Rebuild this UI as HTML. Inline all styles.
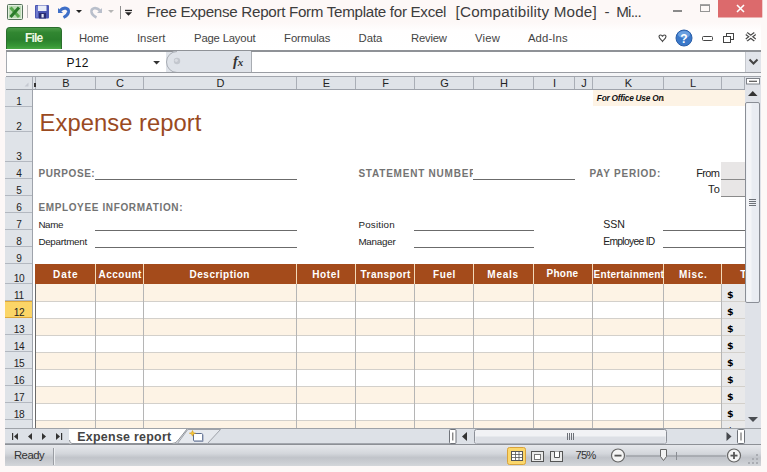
<!DOCTYPE html>
<html><head><meta charset="utf-8"><title>Free Expense Report Form Template for Excel</title>
<style>
*{box-sizing:border-box;margin:0;padding:0}
html,body{width:767px;height:472px;overflow:hidden;background:#fdf8f7;font-family:"Liberation Sans",sans-serif;}
#app{position:relative;width:767px;height:472px;overflow:hidden;background:#fdf8f7}
.abs{position:absolute}
.t{position:absolute;white-space:pre;line-height:1}
.tt{color:#3d3d3d}
.tab{color:#444}
#file{position:absolute;left:6px;top:27px;width:56px;height:22px;border-radius:4px 4px 0 0;background:linear-gradient(#4a9a47 0%,#318631 22%,#2a7f2c 55%,#379636 85%,#4aa845 100%);border:1px solid #2b6e2d;border-bottom:none}
#ribline{position:absolute;left:6px;top:50px;width:755px;height:2px;background:#8f9297}
#fbar{position:absolute;left:6px;top:52px;width:755px;height:20px;background:#dfe3e9}
#namebox{position:absolute;left:0;top:0;width:160px;height:20px;background:#fff;border-left:1px solid #a6aab0}
#finput{position:absolute;left:245px;top:0;width:494px;height:20px;background:#fff;border-left:1px solid #a8acb2}
#fexp{position:absolute;left:739px;top:0;width:16px;height:20px;background:#e1e4ea;border-left:1px solid #c5c8ce}
#gap{position:absolute;left:6px;top:72px;width:755px;height:5px;background:#f4f5f7;border-top:1px solid #9a9da3;border-bottom:1px solid #a2a6ad}
#colhdr{position:absolute;left:6px;top:77px;width:739px;height:13px;background:#dfe3e8;border-bottom:1px solid #9ea3ab;box-shadow:-1px 0 0 #dfe3e8}
.ch{position:absolute;top:0;height:12px;border-right:1px solid #a9aeb6;font-size:11px;line-height:13px;text-align:center;color:#222;padding-left:1px}
#rowhdr{position:absolute;left:5px;top:90px;width:28px;height:338px;background:#dfe3e8;border-right:1px solid #9ea3ab;overflow:hidden}
.rh{position:absolute;left:0;width:27px;padding-left:1px;border-bottom:1px solid #b3b8c0;font-size:11px;letter-spacing:-0.4px;text-align:center;color:#222}
.rh span{position:absolute;left:1px;right:0;bottom:-1px;line-height:11px;transform:scaleX(0.92)}
#grid{position:absolute;left:33px;top:90px;width:712px;height:338px;background:#fff;overflow:hidden}
#grid .t{color:#222}
#grid .lbl{font-weight:bold;color:#737373}
.ul{position:absolute;height:1px;background:#6b6b6b}
.th{position:absolute;top:174px;height:20px;background:#a44b1b;border-right:1px solid #f3d9b8}
#grid .tht{color:#fff;font-weight:bold}
.tr{position:absolute;left:3px;width:686px;height:17px}
.hl{position:absolute;left:3px;width:709px;height:1px;background:#d3d0cb}
.vl{position:absolute;top:194px;width:1px;height:144px;background:#b5b5b5}
.dol{position:absolute;left:689px;width:23px;height:17px;background:#e9e9ea;font-family:'DejaVu Sans',sans-serif;font-size:9.5px;line-height:22px;padding-left:5px;color:#000;font-weight:bold;overflow:hidden}
#vscroll{position:absolute;left:745px;top:77px;width:16px;height:351px;background:#dfe2e8}
#tabbar{position:absolute;left:5px;top:428px;width:756px;height:17px;background:#dde1e7;border-top:1px solid #9ea2a8}
#status{position:absolute;left:5px;top:444px;width:756px;height:22px;background:linear-gradient(#e6e8ec 0%,#d4d7dc 40%,#c1c4ca 60%,#c9ccd1 80%,#d3d6da 100%);border-top:1px solid #8d9096}
</style></head><body><div id="app">


<div class="abs" style="left:6px;top:22px;width:755px;height:28px;background:linear-gradient(#fdf8f7 0%,#fffefe 30%,#fff 100%)"></div>
<svg class="abs" style="left:0;top:0" width="767" height="26" viewBox="0 0 767 26">
 <!-- excel icon -->
 <rect x="7.5" y="4.5" width="15" height="15" rx="1" fill="#e3efdf" stroke="#55715a"/>
 <rect x="9" y="6" width="12" height="12" fill="#8cc383" opacity=".45"/>
 <path d="M10.500 7.500 L19 17" stroke="#57a84c" stroke-width="3"/><path d="M19 7.500 L10.500 17" stroke="#2b7a2b" stroke-width="3"/>
 <rect x="27" y="5" width="1" height="13" fill="#b9b9b9"/>
 <!-- save -->
 <rect x="35" y="5" width="14" height="13.500" rx="1" fill="#4a55b2"/>
 <rect x="36" y="6" width="2" height="11.500" fill="#6f79cc"/>
 <rect x="38" y="5.500" width="8.500" height="5.500" fill="#e9edf8"/>
 <rect x="39" y="13" width="7" height="5.500" fill="#292c74"/>
 <rect x="41.500" y="14" width="2.200" height="3.500" fill="#e4e7f6"/>
 <!-- undo -->
 <path d="M58 8 L58 13 L63 13 Z" fill="#3f6fc8"/>
 <path d="M60 10.5 C64 6.5 69 8 68.5 12 C68 15 65.5 16.5 63.5 17.5" fill="none" stroke="#3f6fc8" stroke-width="3"/>
 <path d="M76 10 L82 10 L79 13 Z" fill="#222"/>
 <!-- redo -->
 <path d="M102 8 L102 13 L97 13 Z" fill="#b9bfcb"/>
 <path d="M100 10.5 C96 6.5 91 8 91.5 12 C92 15 94.500 16.500 96.500 17.500" fill="none" stroke="#b9bfcb" stroke-width="2.600"/>
 <path d="M108 10 L114 10 L111 13 Z" fill="#b5b5b5"/>
 <rect x="120" y="6" width="1" height="13" fill="#8e8e8e"/>
 <rect x="125" y="9.800" width="7" height="1.300" fill="#222"/>
 <path d="M125 12.300 L132 12.300 L128.500 15.800 Z" fill="#222"/>
 <!-- window controls -->
 <rect x="673" y="10" width="9" height="2" fill="#8a8a8a"/>
 <rect x="700.500" y="5" width="9" height="6.500" fill="none" stroke="#959595"/>
 <rect x="700" y="4.300" width="10" height="1.700" fill="#959595"/>
 <rect x="718" y="0" width="44.300" height="17.500" fill="#dc6a6c"/>
 <path d="M737 5 L744 12 M744 5 L737 12" stroke="#fff" stroke-width="1.600"/>
</svg>

<div class="t ft" id="ti1" style="left:146.6px;top:3.8px;font-size:15.2px;letter-spacing:-0.31px;color:#3d3d3d">Free Expense Report Form Template for Excel</div>
<div class="t ft" id="ti2" style="left:455.6px;top:3.8px;font-size:15.2px;letter-spacing:0.18px;color:#3d3d3d">[Compatibility Mode]</div>
<div class="t ft" id="ti3" style="left:604.6px;top:3.8px;font-size:15.2px;letter-spacing:-0.56px;color:#3d3d3d">-</div>
<div class="t ft" id="ti4" style="left:616.2px;top:3.8px;font-size:15.2px;letter-spacing:-0.77px;color:#3d3d3d">Mi...</div>
<div id="file"></div>
<div class="t ft" id="filet" style="left:25.0px;top:32.1px;font-size:12px;letter-spacing:-0.82px;color:#eef8e2;font-weight:bold">File</div>
<div class="t ft" id="tab0" style="left:79.1px;top:32.6px;font-size:11.3px;letter-spacing:-0.18px;color:#444">Home</div>
<div class="t ft" id="tab1" style="left:136.9px;top:32.6px;font-size:11.3px;letter-spacing:0.05px;color:#444">Insert</div>
<div class="t ft" id="tab2" style="left:194.1px;top:32.6px;font-size:11.3px;letter-spacing:-0.19px;color:#444">Page Layout</div>
<div class="t ft" id="tab3" style="left:284.1px;top:32.6px;font-size:11.3px;letter-spacing:-0.11px;color:#444">Formulas</div>
<div class="t ft" id="tab4" style="left:358.6px;top:32.6px;font-size:11.3px;letter-spacing:-0.02px;color:#444">Data</div>
<div class="t ft" id="tab5" style="left:411.1px;top:32.6px;font-size:11.3px;letter-spacing:-0.25px;color:#444">Review</div>
<div class="t ft" id="tab6" style="left:474.9px;top:32.6px;font-size:11.3px;letter-spacing:0.23px;color:#444">View</div>
<div class="t ft" id="tab7" style="left:527.9px;top:32.6px;font-size:11.3px;letter-spacing:0.14px;color:#444">Add-Ins</div>

<svg class="abs" style="left:650px;top:26px" width="117" height="24" viewBox="650 26 117 24">
 <path d="M659 36.500 C659 34.500 662 34.500 662.500 36.500 C663 34.500 666 34.500 666 36.500 C666 38.500 663.500 40 662.500 41.500 C661.500 40 659 38.500 659 36.500 Z" fill="#fff" stroke="#444" stroke-width="1.100"/>
 <circle cx="684" cy="38" r="8" fill="#3a78c9" stroke="#2a5ea8"/>
 <ellipse cx="684" cy="34.500" rx="6" ry="3.500" fill="#7fb0ea" opacity=".7"/>
 <text x="684" y="42.500" text-anchor="middle" font-family="Liberation Sans, sans-serif" font-weight="bold" font-size="12" fill="#fff">?</text>
 <rect x="702.500" y="36.500" width="10" height="4" rx="1" fill="#fff" stroke="#444"/>
 <rect x="726.500" y="33.500" width="7" height="6" fill="#fff" stroke="#444"/>
 <rect x="723.500" y="36.500" width="7" height="6" fill="#fff" stroke="#444"/>
 <path d="M746.500 33.500 L755 40 M755 33.500 L746.500 40" stroke="#444" stroke-width="3.600"/>
 <path d="M746.500 33.500 L755 40 M755 33.500 L746.500 40" stroke="#fff" stroke-width="1.500"/>
</svg>
<div id="ribline"></div>


<div id="fbar">
 <div id="namebox"></div>
 <svg class="abs" style="left:145px;top:-1px" width="100" height="22" viewBox="0 0 100 22">
   <path d="M2.200 10 L9 10 L5.600 13.600 Z" fill="#333"/>
   <path d="M100 0 L26 0 A11 11 0 0 0 26 22 L100 22 Z" fill="#dfe3e9"/>
   <path d="M26 0.500 A10.500 10.500 0 0 0 26 21.500" fill="none" stroke="#a9adb4"/>
   <circle cx="26" cy="10" r="3.200" fill="#c3c7ce"/>
   <circle cx="25.300" cy="9.300" r="1.600" fill="#d9dce2"/>
 </svg>
 <div class="t" style="left:227px;top:2px;font-family:'Liberation Serif',serif;font-style:italic;font-weight:bold;font-size:14.500px;color:#333">f<span style="font-size:11px">x</span></div>
 <div id="finput"></div>
 <div id="fexp"><svg width="15" height="20" viewBox="0 1 15 20"><path d="M3.500 8.500 L7.500 12.500 L11.500 8.500" fill="none" stroke="#444" stroke-width="2"/></svg></div>
</div>
<div id="gap"></div>

<div class="t ft" id="nb" style="left:66.6px;top:57.2px;font-size:12px;letter-spacing:0.22px;color:#111">P12</div>
<div id="colhdr">
<div class="ch" style="left:-1px;width:28px;padding-left:0"><svg width="27" height="12"><path d="M23.500 5.500 L23.500 9.500 L19.500 9.500 Z" fill="#c6cad1"/></svg></div>
<div class="ch" style="left:27px;width:3px;border-right:1px solid #a9aeb6"></div>
<div class="abs" style="left:28px;top:6px;width:1.500px;height:4px;background:#333"></div>
<div class="ch" style="left:30px;width:60px">B</div>
<div class="ch" style="left:90px;width:48px">C</div>
<div class="ch" style="left:138px;width:153px">D</div>
<div class="ch" style="left:291px;width:59px">E</div>
<div class="ch" style="left:350px;width:59px">F</div>
<div class="ch" style="left:409px;width:59px">G</div>
<div class="ch" style="left:468px;width:60px">H</div>
<div class="ch" style="left:528px;width:41px">I</div>
<div class="ch" style="left:569px;width:18px">J</div>
<div class="ch" style="left:587px;width:71px">K</div>
<div class="ch" style="left:658px;width:58px">L</div>
<div class="ch" style="left:716px;width:23px"></div>
</div>
<div id="rowhdr">
<div class="rh" style="top:0px;height:17px"><span>1</span></div>
<div class="rh" style="top:17px;height:25px"><span>2</span></div>
<div class="rh" style="top:42px;height:30px"><span>3</span></div>
<div class="rh" style="top:72px;height:17px"><span>4</span></div>
<div class="rh" style="top:89px;height:17px"><span>5</span></div>
<div class="rh" style="top:106px;height:17px"><span>6</span></div>
<div class="rh" style="top:123px;height:17px"><span>7</span></div>
<div class="rh" style="top:140px;height:17px"><span>8</span></div>
<div class="rh" style="top:157px;height:17px"><span>9</span></div>
<div class="rh" style="top:174px;height:20px"><span>10</span></div>
<div class="rh" style="top:194px;height:17px"><span>11</span></div>
<div class="rh" style="top:211px;height:17px;background:#fbd567;border-bottom:1px solid #e0a93a;border-top:1px solid #e0a93a"><span>12</span></div>
<div class="rh" style="top:228px;height:17px"><span>13</span></div>
<div class="rh" style="top:245px;height:17px"><span>14</span></div>
<div class="rh" style="top:262px;height:17px"><span>15</span></div>
<div class="rh" style="top:279px;height:17px"><span>16</span></div>
<div class="rh" style="top:296px;height:17px"><span>17</span></div>
<div class="rh" style="top:313px;height:17px"><span>18</span></div>
<div class="rh" style="top:330px;height:17px"><span style="bottom:-2px">19</span></div>
</div>
<div id="grid">
<div class="abs" style="left:560px;top:0;width:152px;height:16px;background:#fdf3e5"></div>
<div class="abs" style="left:560px;top:0;width:71px;height:16px;overflow:hidden">
<div class="t ft" id="ofc" style="left:3.8px;top:4.1px;font-size:8.3px;letter-spacing:-0.23px;font-style:italic;font-weight:bold;color:#111">For Office Use Only</div>
</div>
<div class="t ft" id="big" style="left:6.6px;top:20.6px;font-size:23.8px;letter-spacing:0.03px;color:#9a4a1f">Expense report</div>
<div class="t ft lbl" id="l1" style="left:5.6px;top:79.2px;font-size:10px;letter-spacing:0.55px;">PURPOSE:</div>
<div class="abs" style="left:320px;top:70px;width:120px;height:20px;overflow:hidden">
<div class="t ft lbl" id="l2" style="left:5.4px;top:9.2px;font-size:10px;letter-spacing:0.78px;">STATEMENT NUMBER</div>
</div>
<div class="t ft lbl" id="l3" style="left:556.4px;top:79.2px;font-size:10px;letter-spacing:0.78px;">PAY PERIOD:</div>
<div class="t ft lbl" id="l4" style="left:5.4px;top:113.2px;font-size:10px;letter-spacing:0.63px;">EMPLOYEE INFORMATION:</div>
<div class="t ft" id="l5" style="left:663.2px;top:77.7px;font-size:11px;letter-spacing:-0.66px;">From</div>
<div class="t ft" id="l6" style="left:675.1px;top:94.4px;font-size:11px;letter-spacing:0.18px;">To</div>
<div class="t ft" id="l7" style="left:5.4px;top:129.7px;font-size:9.8px;letter-spacing:-0.38px;">Name</div>
<div class="t ft" id="l8" style="left:5.4px;top:146.7px;font-size:9.8px;letter-spacing:-0.27px;">Department</div>
<div class="t ft" id="l9" style="left:325.4px;top:129.7px;font-size:9.8px;letter-spacing:0.21px;">Position</div>
<div class="t ft" id="l10" style="left:325.4px;top:146.7px;font-size:9.8px;letter-spacing:-0.23px;">Manager</div>
<div class="t ft" id="l11" style="left:570.3px;top:128.8px;font-size:10.6px;letter-spacing:-0.15px;">SSN</div>
<div class="t ft" id="l12" style="left:570.3px;top:146.7px;font-size:10.3px;letter-spacing:-0.7px;">Employee ID</div>
<div class="ul" style="left:62px;top:89px;width:202px"></div>
<div class="ul" style="left:440px;top:89px;width:102px"></div>
<div class="ul" style="left:62px;top:140px;width:202px"></div>
<div class="ul" style="left:62px;top:157px;width:202px"></div>
<div class="ul" style="left:381px;top:140px;width:120px"></div>
<div class="ul" style="left:381px;top:157px;width:120px"></div>
<div class="ul" style="left:630px;top:140px;width:82px"></div>
<div class="ul" style="left:630px;top:157px;width:82px"></div>
<div class="abs" style="left:688px;top:72px;width:24px;height:18px;background:#e8e6e6;border-bottom:1px solid #8a8a8a"></div>
<div class="abs" style="left:688px;top:90px;width:24px;height:17px;background:#e8e6e6;border-bottom:1px solid #8a8a8a"></div>
<div class="tr" style="top:194px;background:#fdf3e5"></div>
<div class="dol" style="top:194px">$</div>
<div class="tr" style="top:211px;background:#fff"></div>
<div class="dol" style="top:211px">$</div>
<div class="tr" style="top:228px;background:#fdf3e5"></div>
<div class="dol" style="top:228px">$</div>
<div class="tr" style="top:245px;background:#fff"></div>
<div class="dol" style="top:245px">$</div>
<div class="tr" style="top:262px;background:#fdf3e5"></div>
<div class="dol" style="top:262px">$</div>
<div class="tr" style="top:279px;background:#fff"></div>
<div class="dol" style="top:279px">$</div>
<div class="tr" style="top:296px;background:#fdf3e5"></div>
<div class="dol" style="top:296px">$</div>
<div class="tr" style="top:313px;background:#fff"></div>
<div class="dol" style="top:313px">$</div>
<div class="tr" style="top:330px;background:#fdf3e5"></div>
<div class="dol" style="top:330px">$</div>
<div class="hl" style="top:211px"></div>
<div class="hl" style="top:228px"></div>
<div class="hl" style="top:245px"></div>
<div class="hl" style="top:262px"></div>
<div class="hl" style="top:279px"></div>
<div class="hl" style="top:296px"></div>
<div class="hl" style="top:313px"></div>
<div class="hl" style="top:330px"></div>
<div class="abs" style="left:2px;top:194px;width:1px;height:144px;background:#6a6a6a"></div>
<div class="th" style="left:2px;width:61px"></div>
<div class="th" style="left:63px;width:48px"></div>
<div class="th" style="left:111px;width:153px"></div>
<div class="th" style="left:264px;width:59px"></div>
<div class="th" style="left:323px;width:59px"></div>
<div class="th" style="left:382px;width:59px"></div>
<div class="th" style="left:441px;width:60px"></div>
<div class="th" style="left:501px;width:59px"></div>
<div class="th" style="left:560px;width:71px"></div>
<div class="th" style="left:631px;width:58px"></div>
<div class="th" style="left:689px;width:23px;border-right:none"></div>
<div class="t ft tht" id="th0" style="left:19.9px;top:179.5px;font-size:10px;letter-spacing:1.04px;">Date</div>
<div class="t ft tht" id="th1" style="left:65.6px;top:179.5px;font-size:10px;letter-spacing:0.47px;">Account</div>
<div class="t ft tht" id="th2" style="left:156.6px;top:179.5px;font-size:10px;letter-spacing:0.48px;">Description</div>
<div class="t ft tht" id="th3" style="left:279.3px;top:179.5px;font-size:10px;letter-spacing:0.6px;">Hotel</div>
<div class="t ft tht" id="th4" style="left:327.6px;top:179.5px;font-size:10px;letter-spacing:0.46px;">Transport</div>
<div class="t ft tht" id="th5" style="left:399.9px;top:179.5px;font-size:10px;letter-spacing:0.65px;">Fuel</div>
<div class="t ft tht" id="th6" style="left:454.3px;top:179.5px;font-size:10px;letter-spacing:0.75px;">Meals</div>
<div class="t ft tht" id="th7" style="left:513.6px;top:178.9px;font-size:10px;letter-spacing:0.23px;">Phone</div>
<div class="t ft tht" id="th8" style="left:560.6px;top:179.5px;font-size:10px;letter-spacing:0.26px;">Entertainment</div>
<div class="t ft tht" id="th9" style="left:645.9px;top:179.5px;font-size:10px;letter-spacing:0.7px;">Misc.</div>
<div class="t ft tht" id="th10" style="left:707.2px;top:179.5px;font-size:10px;letter-spacing:0px;">T</div>
<div class="vl" style="left:62px"></div>
<div class="vl" style="left:110px"></div>
<div class="vl" style="left:263px"></div>
<div class="vl" style="left:322px"></div>
<div class="vl" style="left:381px"></div>
<div class="vl" style="left:440px"></div>
<div class="vl" style="left:500px"></div>
<div class="vl" style="left:559px"></div>
<div class="vl" style="left:630px"></div>
<div class="vl" style="left:688px"></div>
</div>

<div id="vscroll">
<svg width="16" height="351" viewBox="0 0 16 351">
 <rect x="0" y="0" width="16" height="351" fill="#dfe2e8"/>
 <rect x="1.500" y="1.500" width="13" height="5.500" fill="#fff" stroke="#7d8188"/>
 <rect x="4" y="3.700" width="8" height="1.200" fill="#555"/>
 <path d="M3 19 L12.500 19 L7.750 14 Z" fill="#333"/>
 <rect x="0.500" y="25.500" width="14" height="200" rx="1.500" fill="#e9ecf2" stroke="#8a8e96"/>
 <rect x="1.500" y="26.500" width="5" height="198" fill="#f4f5f8"/>
 <path d="M4 122.500 h7 M4 124.500 h7 M4 126.500 h7 M4 128.500 h7" stroke="#6d7178" stroke-width="1" />
 <path d="M3 340 L13 340 L8 345 Z" fill="#4a4d52"/>
</svg>
</div>


<div id="tabbar">
<svg class="abs" style="left:0;top:0" width="756" height="16" viewBox="5 429 756 16">
 <rect x="12" y="433" width="1.200" height="7" fill="#333"/><path d="M18 433 L18 440 L14 436.500 Z" fill="#333"/>
 <path d="M32 433 L32 440 L28 436.500 Z" fill="#333"/>
 <path d="M42 433 L42 440 L46 436.500 Z" fill="#333"/>
 <path d="M56 433 L56 440 L60 436.500 Z" fill="#333"/><rect x="61" y="433" width="1.200" height="7" fill="#333"/>
 <rect x="5" y="443" width="446" height="1" fill="#a3a7ae"/>
 <path d="M69 428 L69 442 Q69 444 71.500 444 L172 444 Q175.500 444 177.500 441 L187.500 428 Z" fill="#fff"/>
 <path d="M69.500 440 Q69.500 443.500 72 443.500 L172 443.500 Q175.500 443.500 177.500 441 L187.500 428.500" fill="none" stroke="#8d9197"/>
 <path d="M177.500 443.500 L187.800 429.500 L220.500 429.500 L207.500 443.500 Z" fill="#e6e9ee" stroke="#9fa3aa"/>
 <rect x="193.500" y="433.500" width="9" height="7.500" rx="1" fill="#fff" stroke="#5b6c90"/>
 <path d="M194 441.500 h9 v-7" fill="none" stroke="#8a96b0"/>
 <path d="M192.500 430.500 l1 2.200 l2.200 .5 l-2.200 .8 l-1 2.200 l-1 -2.200 l-2.200 -.8 l2.200 -.5z" fill="#f6c534" stroke="#cf9518" stroke-width=".5"/>
 <rect x="449.500" y="429.500" width="6.500" height="14" rx="1" fill="#fff" stroke="#6f737a"/>
 <rect x="452.300" y="432.500" width="1" height="8" fill="#555"/>
 <path d="M467 432 L467 441 L462 436.500 Z" fill="#333"/>
 <rect x="474.500" y="429.500" width="192" height="14" rx="2" fill="#f1f2f5" stroke="#8b8f97"/>
 <rect x="475.500" y="436.500" width="190" height="7" fill="#dcdfe5"/>
 <path d="M567.500 433 v7 M569.500 433 v7 M571.500 433 v7 M573.500 433 v7" stroke="#6d7178"/>
 <path d="M726.500 432 L726.500 441 L731.500 436.500 Z" fill="#45484d"/>
 <rect x="737.500" y="429.500" width="7" height="14" rx="1" fill="#fff" stroke="#6f737a"/>
 <rect x="740.500" y="432.500" width="1" height="8" fill="#555"/>
</svg>
</div>

<div class="t ft" id="sheetname" style="left:77.3px;top:430.9px;font-size:12.4px;letter-spacing:0.28px;font-weight:bold;color:#444">Expense report</div>

<div id="status">
<div class="abs" style="left:48px;top:3px;width:1px;height:17px;background:#9a9da3"></div>
<div class="abs" style="left:49px;top:3px;width:1px;height:17px;background:#eceef1"></div>
<svg class="abs" style="left:0;top:-1px" width="756" height="23" viewBox="5 444 756 23">
 <rect x="507.500" y="447.500" width="18" height="17" rx="2" fill="#fbd76b" stroke="#d9a23a"/>
 <rect x="511.500" y="451.500" width="11" height="9" fill="#fff" stroke="#555"/>
 <path d="M511 454.500 h12 M511 457.500 h12 M515.500 451 v10 M519 451 v10" stroke="#555" stroke-width=".8"/>
 <rect x="531.500" y="451.500" width="12" height="10" fill="#e9e9e9" stroke="#555"/>
 <rect x="534.500" y="454.500" width="6" height="5" fill="#fff" stroke="#777"/>
 <rect x="550.500" y="451.500" width="12" height="10" fill="#e9e9e9" stroke="#555"/>
 <path d="M554.500 451.500 v6 h5 v-6" fill="#fff" stroke="#555"/>
 <circle cx="618" cy="455.500" r="6.500" fill="#f4f4f4" stroke="#666" stroke-width="1.200"/>
 <rect x="614.500" y="454.700" width="7" height="1.800" fill="#555"/>
 <rect x="626" y="455.500" width="100" height="1" fill="#8a8d93"/>
 <rect x="676" y="452" width="1" height="8" fill="#8a8d93"/>
 <path d="M660.500 449.500 h6 v7 l-3 4 l-3 -4 z" fill="#f2f2f2" stroke="#666"/>
 <circle cx="734" cy="455.500" r="6.500" fill="#f4f4f4" stroke="#666" stroke-width="1.200"/>
 <rect x="730.500" y="454.700" width="7" height="1.800" fill="#555"/>
 <rect x="733.100" y="452" width="1.800" height="7" fill="#555"/>
 <g fill="#a9acb2"><rect x="756" y="462" width="2" height="2"/><rect x="752" y="462" width="2" height="2"/><rect x="756" y="458" width="2" height="2"/><rect x="748" y="462" width="2" height="2"/><rect x="752" y="458" width="2" height="2"/><rect x="756" y="454" width="2" height="2"/></g>
</svg>
</div>

<div class="t ft" id="ready" style="left:13.9px;top:450.2px;font-size:11.3px;letter-spacing:-0.46px;color:#333">Ready</div>
<div class="t ft" id="zoomp" style="left:575.6px;top:450.2px;font-size:11.3px;letter-spacing:-0.91px;color:#333">75%</div>
</div></body></html>
